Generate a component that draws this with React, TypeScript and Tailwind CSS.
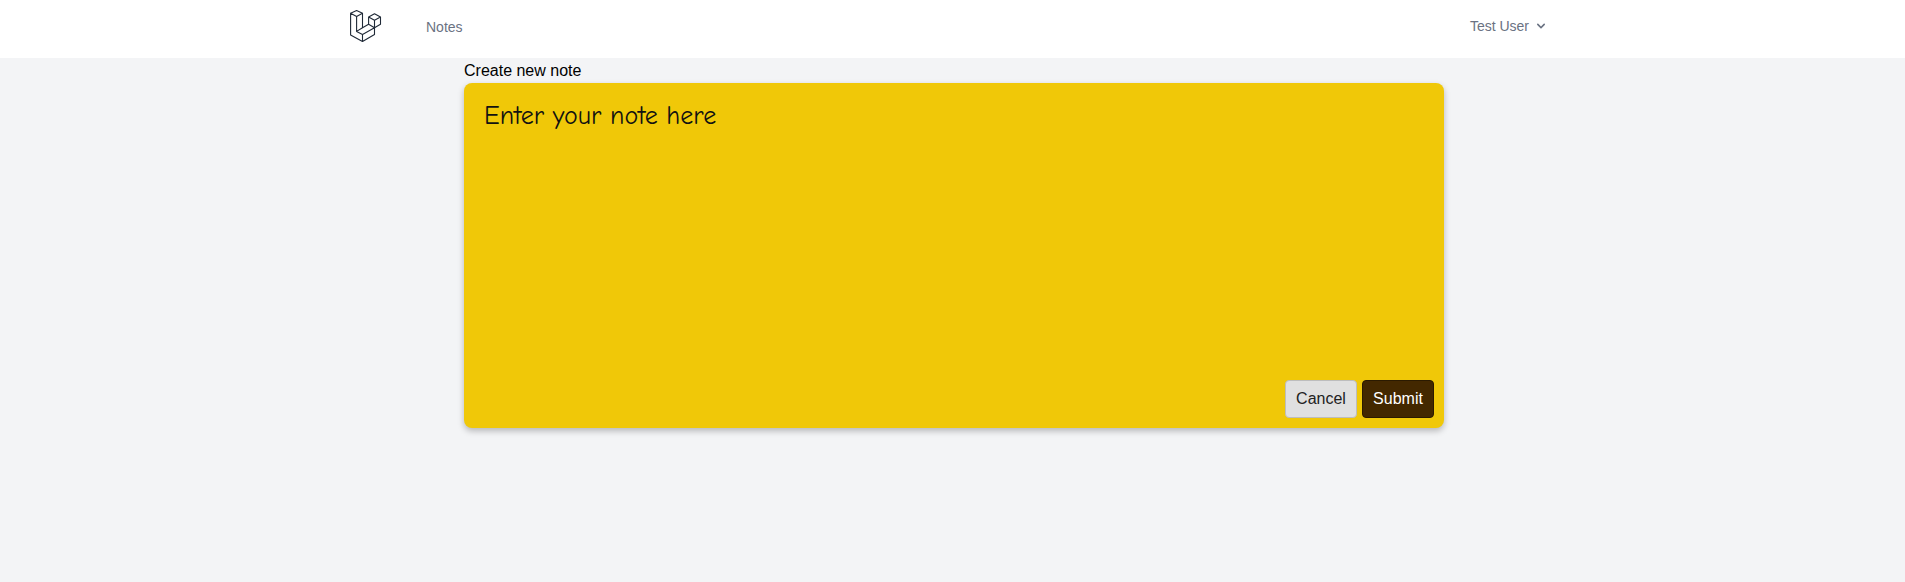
import React from "react";

function Logo() {
  return (
    <svg
      viewBox="0 0 32 32"
      className="h-8 w-8"
      fill="none"
      stroke="#1f2937"
      strokeWidth="1.1"
      strokeLinejoin="round"
      aria-hidden="true"
    >
      <path d="M0.6 3.2 6.6 0.6 12.5 3.2V17.8L6.6 21.4V6.4L0.6 3.2V24.9L12.5 31.5 24.5 24.6V17.7L12.5 24.4V31.5" />
      <path d="M6.6 6.4 12.5 3.2M6.6 21.4 12.5 24.4M12.5 17.8 18.6 14.3 24.5 17.7 30.5 14.2V7L24.5 3.7 18.6 7V14.3M18.6 7 24.5 10.3 30.5 7M24.5 10.3V17.7" />
    </svg>
  );
}

function Header() {
  return (
    <header className="border-b border-gray-100 bg-white pb-4">
      <nav className="mx-auto flex max-w-[1205px] items-start justify-between pr-1.5 text-sm leading-5 text-gray-500">
        <div className="flex items-start gap-11">
          <a href="#home" aria-label="Home" className="pt-2.5">
            <Logo />
          </a>
          <a href="#notes" className="pt-[17px]">
            Notes
          </a>
        </div>
        <button type="button" className="flex items-center gap-1 pt-4">
          Test User
          <svg viewBox="0 0 20 20" className="h-4 w-4" fill="currentColor" aria-hidden="true">
            <path
              fillRule="evenodd"
              clipRule="evenodd"
              d="M5.293 7.293a1 1 0 011.414 0L10 10.586l3.293-3.293a1 1 0 111.414 1.414l-4 4a1 1 0 01-1.414 0l-4-4a1 1 0 010-1.414z"
            />
          </svg>
        </button>
      </nav>
    </header>
  );
}

export default function App() {
  return (
    <div className="min-h-screen bg-gray-100 font-['Liberation_Sans',Arial,sans-serif] text-black">
      <Header />
      <main className="pl-[3px]">
        <form className="mx-auto max-w-[980px]">
          <h1 className="text-base leading-6">
            <label htmlFor="note">Create new note</label>
          </h1>
          <div className="flex flex-col rounded-lg bg-[#f0c808] px-2.5 pb-2.5 shadow-[0_3px_6px_rgba(0,0,0,0.25)]">
            <textarea
              id="note"
              rows={8}
              placeholder="Enter your note here"
              className="block h-[297px] w-full resize-none bg-transparent px-2.5 pt-4 font-['Comic_Sans_MS','Comic_Neue','Open_Sans',sans-serif] text-[26px] leading-[34px] outline-none placeholder:text-[#111111]"
            />
            <div className="flex justify-end gap-[5px]">
              <button
                type="button"
                className="h-[38px] w-[72px] rounded border border-[#bdbdbd] bg-[#e0e0e0] text-[#222222]"
              >
                Cancel
              </button>
              <button
                type="submit"
                className="h-[38px] w-[72px] rounded border border-[#2b1a00] bg-[#432800] text-white"
              >
                Submit
              </button>
            </div>
          </div>
        </form>
      </main>
    </div>
  );
}
